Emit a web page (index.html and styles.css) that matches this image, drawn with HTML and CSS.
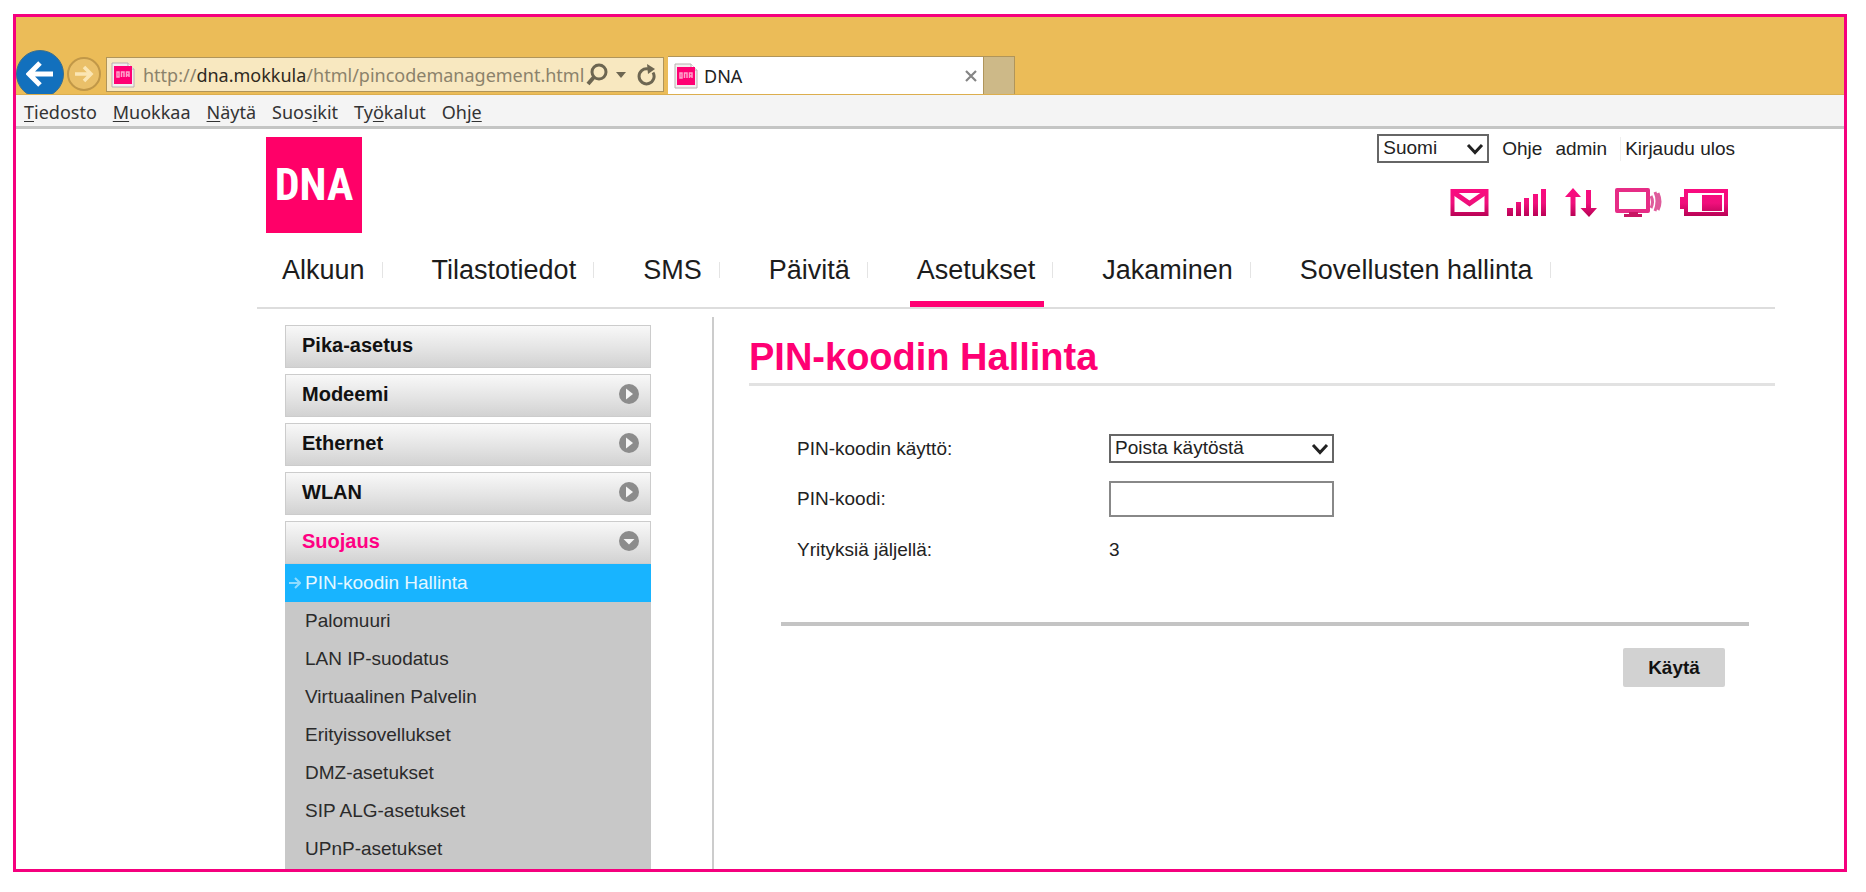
FILE: index.html
```html
<!DOCTYPE html>
<html lang="fi">
<head>
<meta charset="utf-8">
<title>DNA</title>
<link rel="stylesheet" href="styles.css">
</head>
<body>
<svg class="defs" width="0" height="0" aria-hidden="true">
  <defs>
    <linearGradient id="pink" gradientUnits="userSpaceOnUse" x1="0" y1="0" x2="0" y2="30">
      <stop offset="0" stop-color="#fb0a80"/><stop offset=".5" stop-color="#f0107c"/><stop offset="1" stop-color="#b0004f"/>
    </linearGradient>
    <symbol id="open" viewBox="0 0 22 22"><circle cx="11" cy="11" r="10" fill="#8c8c8c"/><path d="M8 5.500 15 11 8 16.500Z" fill="#f6f6f6"/></symbol>
    <symbol id="down" viewBox="0 0 22 22"><circle cx="11" cy="11" r="10" fill="#8c8c8c"/><path d="M5.500 9H16.500L11 14.500Z" fill="#f6f6f6"/></symbol>
    <symbol id="chev" viewBox="0 0 18 12"><path d="M2 2 9 9.500 16 2" fill="none" stroke="#222" stroke-width="3"/></symbol>
    <symbol id="favicon" viewBox="0 0 24 26">
      <path d="M1 1H17L23 7V25H1Z" fill="#f3eff0" stroke="#b9b0b0"/>
      <path d="M17 1V7H23" fill="#fff" stroke="#b9b0b0"/>
      <rect x="3" y="4" width="18" height="18" fill="#ff0073"/>
      <path d="M6 10V15H8V10ZM10.500 15V10H13V15M15.500 15V10H18V15M15.500 13H18" fill="none" stroke="#ffa3cb" stroke-width="1.500"/>
    </symbol>
  </defs>
</svg>
<div class="window">
  <header class="titlebar">
    <button class="back" type="button" aria-label="Takaisin"><svg viewBox="0 0 28 28"><path d="M27 14H4M14 3 3 14 14 25" fill="none" stroke="#fff" stroke-width="5"/></svg></button>
    <button class="forward" type="button" aria-label="Eteenpäin"><svg viewBox="0 0 20 20"><path d="M1 10H17M10 3 17 10 10 17" fill="none" stroke="#fbe6b4" stroke-width="3.500"/></svg></button>
    <div class="address">
      <svg class="fav"><use href="#favicon"/></svg>
      <span class="url">http://<b>dna.mokkula</b>/html/pincodemanagement.html</span>
      <svg class="search" viewBox="0 0 22 24"><circle cx="13" cy="9" r="7" fill="none" stroke="#6d6651" stroke-width="3"/><path d="M8 14 2 21" stroke="#6d6651" stroke-width="4"/></svg>
      <svg class="caret" viewBox="0 0 10 6"><path d="M0 0H10L5 6Z" fill="#6d6651"/></svg>
      <svg class="reload" viewBox="0 0 20 22"><path d="M16 8.500A7.500 7.500 0 1 1 11 5" fill="none" stroke="#6d6651" stroke-width="3"/><path d="M10 0 18 5 11 10Z" fill="#6d6651"/></svg>
    </div>
    <div class="tab">
      <svg class="fav"><use href="#favicon"/></svg>
      <span class="tab-name">DNA</span>
      <button class="close" type="button" aria-label="Sulje"><svg viewBox="0 0 12 12"><path d="M1 1 11 11M11 1 1 11" stroke="#858585" stroke-width="2.200"/></svg></button>
    </div>
    <button class="newtab" type="button" aria-label="Uusi välilehti"></button>
  </header>
  <nav class="menubar" aria-label="Selain">
    <span><u>T</u>iedosto</span><span><u>M</u>uokkaa</span><span><u>N</u>äytä</span><span>Suos<u>i</u>kit</span><span>Ty<u>ö</u>kalut</span><span>Ohj<u>e</u></span>
  </nav>
  <div class="page">
    <header class="top">
      <a class="logo" href="#">DNA</a>
      <div class="tools">
        <div class="account">
          <span class="select lang"><select aria-label="Kieli"><option>Suomi</option></select><svg><use href="#chev"/></svg></span>
          <a href="#">Ohje</a><a href="#">admin</a><a class="logout" href="#">Kirjaudu ulos</a>
        </div>
        <div class="status">
          <svg width="39" height="30" viewBox="0 0 39 30"><path d="M2.500 3H36.500V26H2.500Z" fill="none" stroke="url(#pink)" stroke-width="4"/><path d="M3 4 19.500 15.500 36 4" fill="none" stroke="url(#pink)" stroke-width="5"/></svg>
          <svg width="40" height="30" viewBox="0 0 40 30"><path d="M0 20H6V28H0ZM9 14H14V28H9ZM17 10H22V28H17ZM26 6H31V28H26ZM34 1H39V28H34Z" fill="url(#pink)"/></svg>
          <svg width="32" height="30" viewBox="0 0 32 30"><path d="M8 0 16 9H10.500V28H5.500V9H0ZM21 2H26V20H32L24 29 15.500 20H21Z" fill="url(#pink)"/></svg>
          <svg width="47" height="30" viewBox="0 0 47 30"><path d="M2 2H33V23H2Z" fill="none" stroke="#e62c86" stroke-width="4" stroke-linejoin="round"/><path d="M14 24H23V26H27V29H9V26H14Z" fill="#c81563"/><path d="M36 8Q39 14 36 20M40 4Q44 13 40 23M43 5Q47 14 43 22" fill="none" stroke="#df5b9b" stroke-width="3"/></svg>
          <svg width="48" height="30" viewBox="0 0 48 30"><path d="M6 3H46V26H6Z" fill="#fff" stroke="url(#pink)" stroke-width="4"/><path d="M0 9H6V21H0Z" fill="url(#pink)"/><path d="M22 7H42V23H22Z" fill="url(#pink)"/></svg>
        </div>
      </div>
    </header>
    <nav class="mainnav" aria-label="Päävalikko">
      <a href="#">Alkuun</a><a href="#">Tilastotiedot</a><a href="#">SMS</a><a href="#">Päivitä</a><a class="current" href="#">Asetukset</a><a href="#">Jakaminen</a><a href="#">Sovellusten hallinta</a>
    </nav>
    <div class="columns">
      <nav class="side" aria-label="Asetukset">
        <a class="group" href="#">Pika-asetus</a>
        <a class="group" href="#">Modeemi<svg><use href="#open"/></svg></a>
        <a class="group" href="#">Ethernet<svg><use href="#open"/></svg></a>
        <a class="group" href="#">WLAN<svg><use href="#open"/></svg></a>
        <a class="group chosen" href="#">Suojaus<svg><use href="#down"/></svg></a>
        <div class="sub">
          <a class="active" href="#"><svg viewBox="0 0 12 12"><path d="M0 6H11M6 1 11 6 6 11" fill="none" stroke="#8fdcff" stroke-width="2"/></svg>PIN-koodin Hallinta</a>
          <a href="#">Palomuuri</a>
          <a href="#">LAN IP-suodatus</a>
          <a href="#">Virtuaalinen Palvelin</a>
          <a href="#">Erityissovellukset</a>
          <a href="#">DMZ-asetukset</a>
          <a href="#">SIP ALG-asetukset</a>
          <a href="#">UPnP-asetukset</a>
        </div>
      </nav>
      <main class="main">
        <h1>PIN-koodin Hallinta</h1>
        <form class="form">
          <div class="fields">
            <label for="use">PIN-koodin käyttö:</label>
            <span class="select"><select id="use"><option>Poista käytöstä</option></select><svg><use href="#chev"/></svg></span>
            <label for="pin">PIN-koodi:</label>
            <input id="pin" type="text">
            <span>Yrityksiä jäljellä:</span>
            <output>3</output>
          </div>
          <div class="actions"><button class="apply" type="button">Käytä</button></div>
        </form>
      </main>
    </div>
  </div>
</div>
</body>
</html>
```
FILE: styles.css
```css
* { box-sizing: border-box; }
body {
  margin: 0;
  padding: 14px 19px 20px 13px;
  min-height: 100vh;
  display: flex;
  background: #fff;
  color: #222;
  font: 19px/24px "Liberation Sans", Arial, sans-serif;
}
a { color: inherit; text-decoration: none; }
button { padding: 0; border: 0; font: inherit; color: inherit; }
.defs { position: absolute; }
.window {
  flex: 1;
  min-width: 0;
  display: flex;
  flex-direction: column;
  border: 3px solid #f5007e;
  overflow: hidden;
}

.titlebar {
  display: flex;
  align-items: flex-end;
  height: 78px;
  background: #ebbc58;
  border-bottom: 1px solid #dcae4e;
  overflow: hidden;
  font: 18px/24px "Noto Sans", sans-serif;
}
.back, .forward { display: grid; place-items: center; border-radius: 50%; flex: none; }
.back { width: 48px; height: 48px; margin-bottom: -4px; background: #1270bd; border: 1px solid #3c6f8c; }
.back svg { width: 28px; height: 28px; }
.forward { width: 34px; height: 34px; margin: 0 5px 3px 3px; background: #eac069; border: 2px solid #c19848; }
.forward svg { width: 20px; height: 20px; }
.address {
  flex: none;
  display: flex;
  align-items: center;
  width: 558px;
  height: 35px;
  margin: 0 4px 2px 0;
  padding: 0 6px 0 4px;
  background: #f8e8c0;
  border: 1px solid #b0955a;
  color: #8b826b;
}
.fav { flex: none; width: 24px; height: 26px; }
.url { flex: 1; margin-left: 8px; white-space: nowrap; }
.url b { font-weight: 400; color: #2f2a1e; }
.search { width: 22px; height: 24px; }
.caret { width: 10px; height: 6px; margin: 0 11px 0 8px; }
.reload { width: 20px; height: 22px; }
.tab {
  flex: none;
  display: flex;
  align-items: center;
  width: 315px;
  height: 38px;
  padding: 0 6px;
  background: #fff;
  border-top: 1px solid #b0955a;
}
.tab-name { flex: 1; margin-left: 6px; }
.close { width: 12px; height: 12px; background: none; display: grid; }
.newtab { width: 32px; height: 38px; background: #cdb988; border: 1px solid #b0955a; border-width: 1px 1px 0; }

.menubar {
  display: flex;
  align-items: center;
  gap: 16px;
  height: 34px;
  padding: 2px 8px 0;
  background: #f4f4f4;
  border-bottom: 3px solid #c4c5c4;
  color: #333;
  font: 18px/24px "Noto Sans", sans-serif;
}
.menubar u { text-underline-offset: 2px; }

.page { flex: 1; display: flex; flex-direction: column; padding: 8px 69px 0 241px; }
.top { display: flex; justify-content: space-between; padding-left: 9px; }
.logo {
  display: grid;
  place-items: center;
  width: 96px;
  height: 96px;
  background: #ff0068;
  color: #fff;
  font: 700 44px/48px "Liberation Sans Narrow", "Roboto Condensed", "DejaVu Sans Condensed", sans-serif;
}
.tools { display: flex; flex-direction: column; align-items: flex-end; padding-right: 40px; }
.account { display: flex; align-items: center; gap: 13px; margin-top: -3px; }
.logout { padding-left: 4px; border-left: 1px solid #eee; }
.select { position: relative; display: flex; }
.select select {
  appearance: none;
  width: 100%;
  height: 29px;
  padding: 0 28px 2px 4px;
  border: 2px solid #666;
  border-radius: 0;
  background: #fff;
  color: #222;
  font: inherit;
}
.select svg { position: absolute; right: 5px; top: 9px; width: 18px; height: 12px; pointer-events: none; }
.lang { width: 112px; }
.status { display: flex; gap: 18px; margin: 25px 7px 0 0; }

.mainnav {
  display: flex;
  gap: 42px;
  padding-left: 18px;
  border-bottom: 2px solid #ddd;
  font-size: 27px;
  line-height: 32px;
  color: #1c1c1c;
}
.mainnav a {
  position: relative;
  display: flex;
  align-items: center;
  padding: 21px 0 21px 7px;
  white-space: nowrap;
}
.mainnav a::after { content: ""; width: 1px; height: 16px; margin-left: 17px; background: #e4e4e4; }
.mainnav .current::before {
  content: "";
  position: absolute;
  left: 0;
  right: 9px;
  bottom: 0;
  height: 6px;
  background: #ff0073;
}

.columns { flex: 1; display: flex; }
.side {
  flex: none;
  width: 457px;
  padding: 16px 63px 0 28px;
  background: linear-gradient(#ccc, #ccc) right 8px / 2px 100% no-repeat;
  display: flex;
  flex-direction: column;
}
.group {
  display: flex;
  justify-content: space-between;
  align-items: center;
  height: 43px;
  margin-bottom: 6px;
  padding: 0 10px 3px 16px;
  border: 1px solid #ccc;
  background: linear-gradient(#f8f8f8, #e4e4e4 55%, #d2d2d2);
  font-size: 20px;
  font-weight: 700;
  color: #111;
}
.group svg { width: 22px; height: 22px; }
.chosen { color: #ff0083; margin-bottom: 0; }
.sub { flex: 1; background: #c8c8c8; color: #2b2b2b; }
.sub a { display: flex; align-items: center; height: 38px; padding-left: 20px; }
.sub .active { padding-left: 4px; gap: 4px; background: #18b4ff; color: #e4f7ff; }
.active svg { width: 12px; height: 12px; }

.main { flex: 1; min-width: 0; padding: 26px 0 0 35px; }
h1 {
  margin: 0;
  padding-bottom: 4px;
  border-bottom: 3px solid #e2e2e2;
  color: #ff0073;
  font-size: 38px;
  line-height: 44px;
}
.form { padding: 48px 26px 0 32px; }
.fields {
  display: grid;
  grid-template-columns: 312px 225px;
  grid-template-rows: 29px 36px 29px;
  row-gap: 18px;
  align-items: center;
  padding: 0 16px 58px;
}
.fields input { height: 36px; border: 2px solid #888; background: #fff; font: inherit; padding: 0 4px; }
.actions { display: flex; justify-content: flex-end; padding: 22px 24px 0; border-top: 4px solid #c4c4c4; }
.apply { width: 102px; height: 39px; border-radius: 2px; background: #d2d2d2; color: #111; font-weight: 700; }
```
